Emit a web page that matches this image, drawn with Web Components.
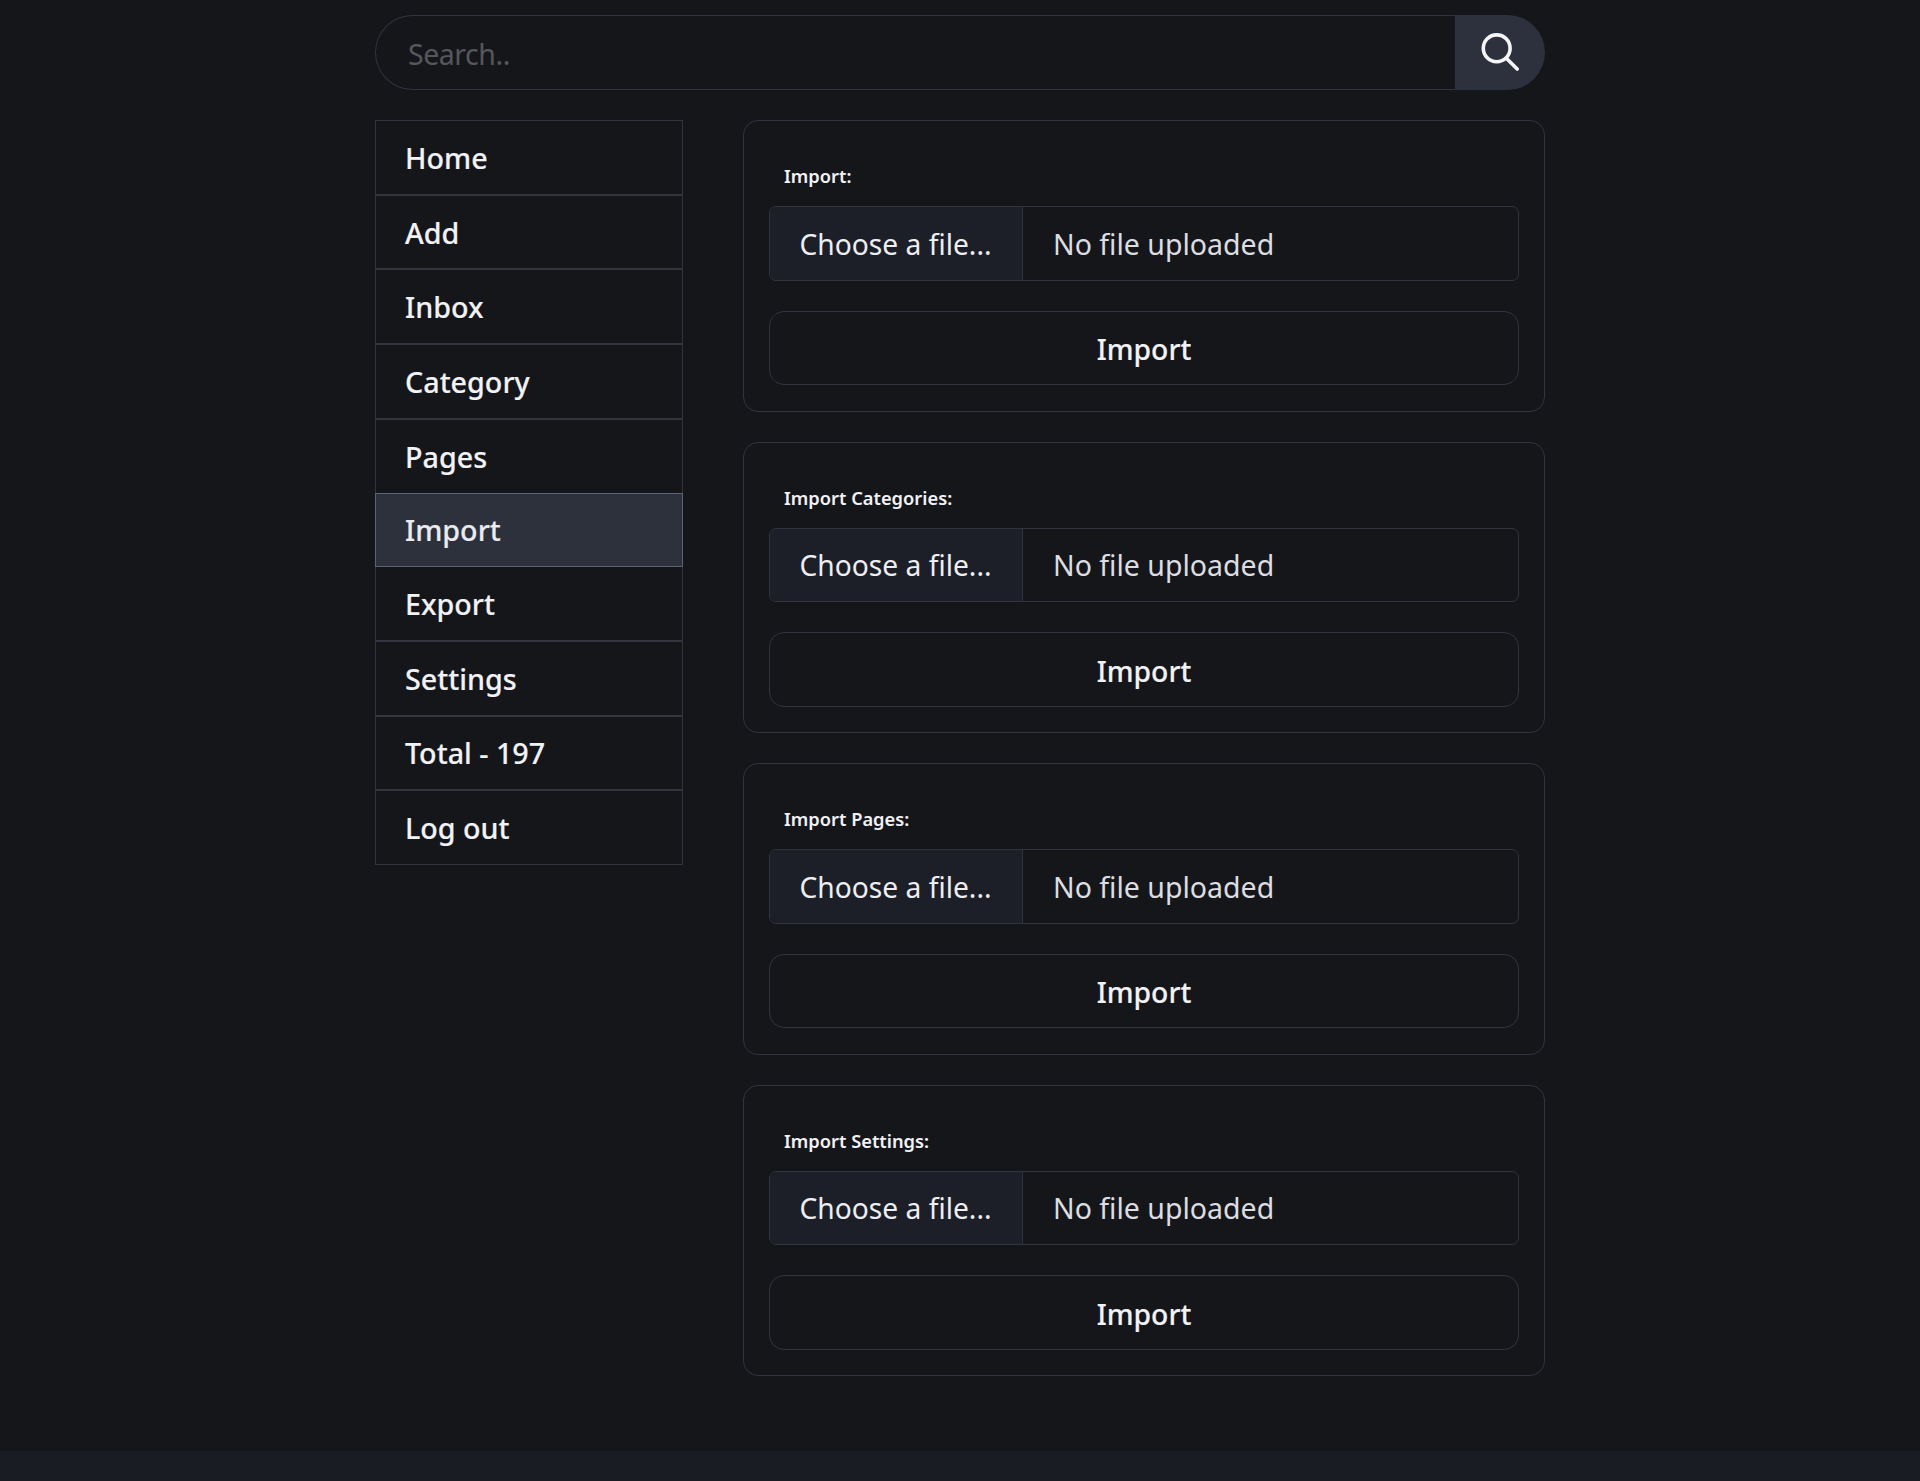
<!DOCTYPE html>
<html lang="en"><head><meta charset="utf-8"><title>Import</title>
<style>
html,body{margin:0;padding:0;background:#15161a;color:#f1f2f6;font-family:"Noto Sans","Open Sans","Liberation Sans",sans-serif}
</style></head><body>
<app-page>
  <search-bar slot="top" placeholder="Search.."></search-bar>
  <side-nav slot="side">
    <nav-item>Home</nav-item><nav-item>Add</nav-item><nav-item>Inbox</nav-item><nav-item>Category</nav-item><nav-item>Pages</nav-item>
    <nav-item active>Import</nav-item><nav-item>Export</nav-item><nav-item>Settings</nav-item><nav-item>Total - 197</nav-item><nav-item>Log out</nav-item>
  </side-nav>
  <import-card label="Import:"></import-card>
  <import-card label="Import Categories:"></import-card>
  <import-card label="Import Pages:"></import-card>
  <import-card label="Import Settings:"></import-card>
</app-page>
<script>
const define=(name,html)=>customElements.define(name,class extends HTMLElement{
  connectedCallback(){ if(this.shadowRoot) return; const r=this.attachShadow({mode:'open'}); r.innerHTML=html(this); }
});
define('app-page',()=>`<style>
:host{display:flex;flex-direction:column;min-height:1481px;box-sizing:border-box}
.wrap{width:1170px;margin:0 auto;padding-top:15px;flex:1}
.cols{display:flex;gap:60px;margin-top:30px}
.side{flex:0 0 308px}
.main{flex:1;display:flex;flex-direction:column;gap:30px}
footer{height:30px;background:#191c22}
</style><div class="wrap"><slot name="top"></slot><div class="cols"><div class="side"><slot name="side"></slot></div><div class="main"><slot></slot></div></div></div><footer></footer>`);
define('search-bar',h=>`<style>
:host{display:flex;height:75px;box-sizing:border-box}
.in{flex:1;display:flex;align-items:center;box-sizing:border-box;border:1px solid #33333f;border-right:0;border-radius:37.5px 0 0 37.5px;padding:3px 0 0 32px;font-size:28.5px;letter-spacing:-.45px;color:#56575c;line-height:40px}
.btn{flex:0 0 90px;background:#2d313d;border-radius:0 37.5px 37.5px 0;display:flex;align-items:center;justify-content:center}
svg{display:block;margin-top:-1px}
</style><div class="in"><span>${h.getAttribute('placeholder')}</span></div><div class="btn"><svg width="38" height="38" viewBox="0 0 38 38" fill="none" stroke="#f6f6f8" stroke-width="3.6" stroke-linecap="round"><circle cx="15.7" cy="15.3" r="13.4"/><path d="M25.6 25.4 36.2 36"/></svg></div>`);
define('side-nav',()=>`<style>:host{display:flex;flex-direction:column;height:745px;box-sizing:border-box;border-top:1px solid #33333f;border-bottom:1px solid #33333f}</style><slot></slot>`);
define('nav-item',h=>`<style>
:host{display:flex;align-items:center;flex:1;box-sizing:border-box;border:1px solid #33333f;border-width:0 1px 2px;border-bottom-color:#323540;padding:1px 0 0 29px;font-size:28.7px;font-weight:500;color:#f1f2f6;line-height:40px;-webkit-text-stroke:.15px currentColor}
:host(:last-child){border-bottom:0}
:host([active]){background:#2d313c;border:1px solid #596378;margin-top:-2px;padding-top:1px;color:#e9ebf0}
</style><slot></slot>`);
define('import-card',h=>`<style>
:host{display:block;box-sizing:border-box;height:291.5px;border:1px solid #33333f;border-radius:15px;padding:25px}
label{display:block;font-size:18.3px;font-weight:600;line-height:26px;padding:17px 0 0 15px;height:60px;box-sizing:border-box;color:#f1f2f6}
.grp{display:flex;height:74.7px;box-sizing:border-box;border:1px solid #33333f;border-radius:7px;overflow:hidden;font-size:28.2px;line-height:40px}
.ch{flex:0 0 253px;box-sizing:border-box;background:#1c1f27;border-right:1px solid #33333f;padding:1px 0 0 29.5px;display:flex;align-items:center;color:#eceef2}
.nf{flex:1;padding:1px 0 0 30px;display:flex;align-items:center;color:#dcdde1;font-size:28.5px}
.bt{margin-top:30.3px;height:74.5px;box-sizing:border-box;border:1px solid #33333f;border-radius:15px;display:flex;align-items:center;justify-content:center;font-size:28.3px;font-weight:500;color:#f1f2f6;padding-top:2px;-webkit-text-stroke:.15px currentColor}
</style><label>${h.getAttribute('label')}</label><div class="grp"><div class="ch">Choose a file...</div><div class="nf">No file uploaded</div></div><div class="bt">Import</div>`);
</script></body></html>
